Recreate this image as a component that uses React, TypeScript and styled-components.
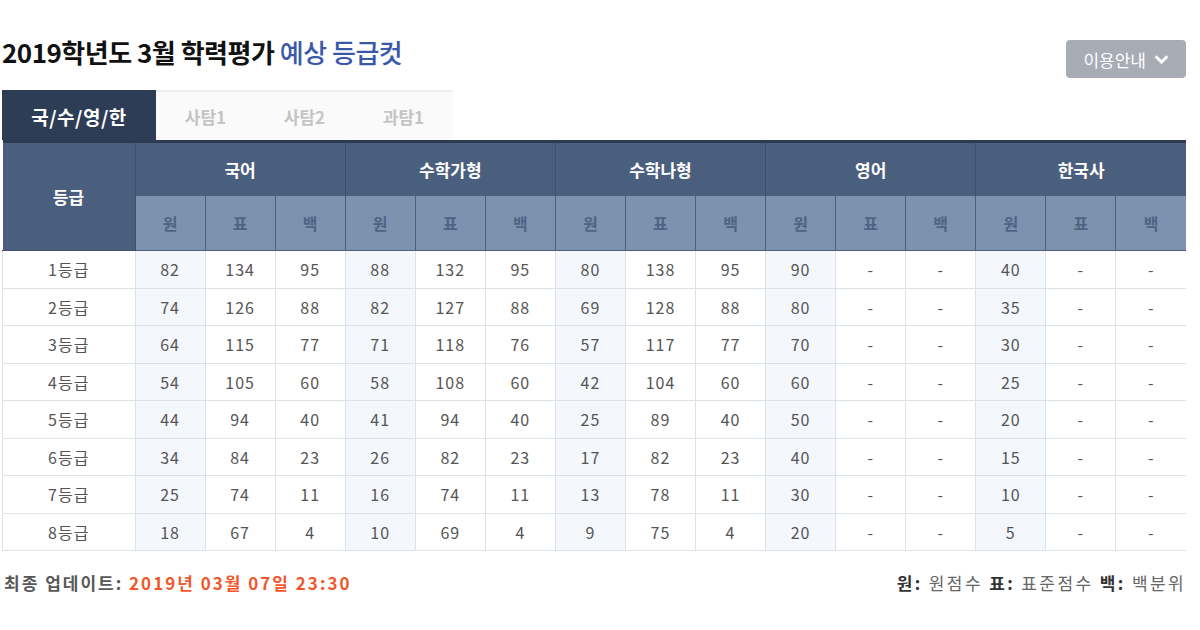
import styled, { createGlobalStyle } from "styled-components";

const GlobalStyle = createGlobalStyle`
  body {
    margin: 0;
    background: #ffffff;
    font-family: "Noto Sans CJK KR", "Noto Sans", sans-serif;
  }
`;

const Page = styled.div`
  width: 1184px;
  padding: 32px 14px 0 2px;
`;

const TitleBar = styled.div`
  display: flex;
  justify-content: space-between;
  align-items: flex-start;
  height: 58px;
`;

const Title = styled.h1`
  margin: 0;
  font-size: 26px;
  font-weight: 700;
  letter-spacing: -0.5px;
  color: #111;
  line-height: 40px;
  span {
    color: #3a58a8;
    font-weight: 500;
  }
`;

const GuideButton = styled.button`
  margin-top: 8px;
  display: flex;
  align-items: center;
  gap: 7px;
  height: 38px;
  padding: 0 16px 0 17px;
  border: none;
  border-radius: 4px;
  background: #a8acb5;
  color: #fff;
  font-family: inherit;
  font-size: 17px;
`;

const Tabs = styled.div`
  display: flex;
  height: 50px;
`;

const Tab = styled.div<{ $active?: boolean }>`
  width: ${(p) => (p.$active ? "154px" : "99px")};
  display: flex;
  align-items: center;
  justify-content: center;
  font-size: ${(p) => (p.$active ? "19px" : "17px")};
  font-weight: 700;
  letter-spacing: ${(p) => (p.$active ? "0.5px" : "0")};
  color: ${(p) => (p.$active ? "#ffffff" : "#c4c4c4")};
  background: ${(p) => (p.$active ? "#2d3d55" : "#fafafa")};
  border-top: 2px solid ${(p) => (p.$active ? "#2d3d55" : "#ececec")};
  box-sizing: border-box;
`;

const Table = styled.table`
  width: 1184px;
  border-collapse: collapse;
  table-layout: fixed;
  border-top: 3px solid #2d3b52;
`;

const GradeHead = styled.th`
  width: 132px;
  padding: 0;
  background: #4a5f7e;
  color: #fff;
  font-size: 17px;
  font-weight: 700;
  border-right: 1px solid #3d5069;
  border-bottom: 1px solid #3d5069;
`;

const SubjectHead = styled.th`
  height: 53px;
  padding: 0;
  background: #4a5f7e;
  color: #fff;
  font-size: 17px;
  font-weight: 700;
  border-right: 1px solid #3d5069;
  &:last-child {
    border-right: none;
  }
`;

const ScoreHead = styled.th`
  height: 54px;
  padding: 0;
  background: #7c92ae;
  color: #4f6484;
  font-size: 16px;
  font-weight: 700;
  border-right: 1px solid #4a5f7e;
  border-bottom: 1px solid #4a5f7e;
  &:last-child {
    border-right: none;
  }
`;

const Row = styled.tr`
  height: 37.5px;
`;

const Cell = styled.td<{ $shade?: boolean }>`
  text-align: center;
  font-size: 16px;
  color: #555;
  letter-spacing: 1px;
  background: ${(p) => (p.$shade ? "#f4f7fc" : "#ffffff")};
  border: 1px solid #dde1e8;
  padding: 0;
  &:last-child {
    border-right: none;
  }
`;

const Footer = styled.div`
  display: flex;
  justify-content: space-between;
  align-items: center;
  margin-top: 19px;
  padding-left: 2px;
`;

const Updated = styled.div`
  font-size: 17px;
  font-weight: 700;
  color: #585858;
  letter-spacing: 2px;
  span {
    color: #f0582b;
  }
`;

const Legend = styled.div`
  font-size: 17px;
  color: #666;
  letter-spacing: 2.4px;
  b {
    color: #333;
    font-weight: 700;
  }
`;

const subjects = ["국어", "수학가형", "수학나형", "영어", "한국사"];

const rows: string[][] = [
  ["82", "134", "95", "88", "132", "95", "80", "138", "95", "90", "-", "-", "40", "-", "-"],
  ["74", "126", "88", "82", "127", "88", "69", "128", "88", "80", "-", "-", "35", "-", "-"],
  ["64", "115", "77", "71", "118", "76", "57", "117", "77", "70", "-", "-", "30", "-", "-"],
  ["54", "105", "60", "58", "108", "60", "42", "104", "60", "60", "-", "-", "25", "-", "-"],
  ["44", "94", "40", "41", "94", "40", "25", "89", "40", "50", "-", "-", "20", "-", "-"],
  ["34", "84", "23", "26", "82", "23", "17", "82", "23", "40", "-", "-", "15", "-", "-"],
  ["25", "74", "11", "16", "74", "11", "13", "78", "11", "30", "-", "-", "10", "-", "-"],
  ["18", "67", "4", "10", "69", "4", "9", "75", "4", "20", "-", "-", "5", "-", "-"],
];

const Chevron = () => (
  <svg width="17" height="17" viewBox="0 0 16 16">
    <path d="M2.5 5 L8 10.5 L13.5 5" fill="none" stroke="#fff" strokeWidth="2.8" />
  </svg>
);

export default function App() {
  return (
    <Page>
      <GlobalStyle />
      <TitleBar>
        <Title>
          2019학년도 3월 학력평가 <span>예상 등급컷</span>
        </Title>
        <GuideButton>
          이용안내 <Chevron />
        </GuideButton>
      </TitleBar>
      <Tabs>
        <Tab $active>국/수/영/한</Tab>
        <Tab>사탐1</Tab>
        <Tab>사탐2</Tab>
        <Tab>과탐1</Tab>
      </Tabs>
      <Table>
        <thead>
          <tr>
            <GradeHead rowSpan={2}>등급</GradeHead>
            {subjects.map((s) => (
              <SubjectHead key={s} colSpan={3}>
                {s}
              </SubjectHead>
            ))}
          </tr>
          <tr>
            {subjects.flatMap((s) =>
              ["원", "표", "백"].map((k) => <ScoreHead key={s + k}>{k}</ScoreHead>)
            )}
          </tr>
        </thead>
        <tbody>
          {rows.map((r, i) => (
            <Row key={i}>
              <Cell>{i + 1}등급</Cell>
              {r.map((v, j) => (
                <Cell key={j} $shade={j % 3 === 0}>
                  {v}
                </Cell>
              ))}
            </Row>
          ))}
        </tbody>
      </Table>
      <Footer>
        <Updated>
          최종 업데이트: <span>2019년 03월 07일 23:30</span>
        </Updated>
        <Legend>
          <b>원:</b> 원점수 <b>표:</b> 표준점수 <b>백:</b> 백분위
        </Legend>
      </Footer>
    </Page>
  );
}
